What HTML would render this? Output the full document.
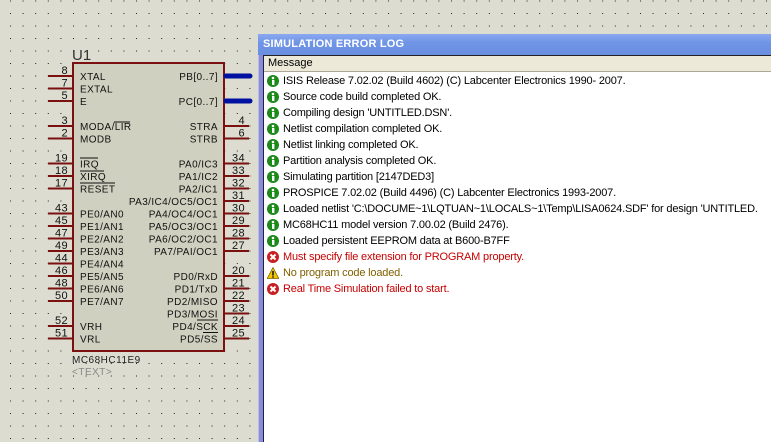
<!DOCTYPE html>
<html><head><meta charset="utf-8"><style>
html,body{margin:0;padding:0;width:771px;height:442px;overflow:hidden;background:#dcdcd0;position:relative;}
svg text{font-family:"Liberation Sans",sans-serif;}
#win{position:absolute;left:258px;top:34px;width:513px;height:408px;background:#fff;overflow:hidden;}
#frame{position:absolute;left:0;top:0;width:4px;height:100%;background:#8a8cd8;border-left:1px solid #b8bce8;}
#frame2{position:absolute;left:5px;top:21px;width:1px;height:100%;background:#202040;}
#title{position:absolute;left:0;top:0;right:0;height:21px;background:linear-gradient(#8aa8f0,#7095e6 40%,#6a8ee0);color:#fff;font:bold 11px "Liberation Sans",sans-serif;line-height:21px;padding-left:5px;letter-spacing:0.2px;}
#hdr{position:absolute;left:6px;top:21px;right:0;height:15px;background:#ece9d8;border-top:1px solid #222;border-bottom:1px solid #aca899;font:11px "Liberation Sans",sans-serif;line-height:15px;padding-left:4px;color:#000;}
.row{position:absolute;left:9px;height:16px;font:11px "Liberation Sans",sans-serif;line-height:16px;white-space:nowrap;color:#000;}
.row svg{position:absolute;left:0;top:2px;}
.row span{position:absolute;left:16px;top:0;letter-spacing:-0.18px;}
.e{color:#c80000}.w{color:#806000}
</style></head><body>
<svg width="771" height="442" style="position:absolute;left:0;top:0">
<defs><pattern id="d" x="10" y="13" width="12.6" height="12.5" patternUnits="userSpaceOnUse"><rect x="0" y="0" width="1" height="1" fill="#222"/></pattern></defs>
<rect width="771" height="442" fill="url(#d)"/>
<text x="72" y="60" font-size="15" fill="#333">U1</text>
<rect x="73" y="63" width="151" height="288" fill="#d0d0c0" stroke="#7a1010" stroke-width="2"/>
<g stroke="#7a1010" stroke-width="2" id="pins"></g>
<g font-size="10" fill="#111" letter-spacing="0.4" id="labels"></g>
<line x1="226" y1="76" x2="250" y2="76" stroke="#0010a0" stroke-width="5" stroke-linecap="round"/>
<line x1="226" y1="101" x2="250" y2="101" stroke="#0010a0" stroke-width="5" stroke-linecap="round"/>
<text x="72" y="363" font-size="10" fill="#222" letter-spacing="0.5">MC68HC11E9</text>
<text x="72" y="375" font-size="10" fill="#888" letter-spacing="0.5">&lt;TEXT&gt;</text>
</svg>
<div id="win">
<div id="frame"></div><div id="frame2"></div>
<div id="title">SIMULATION ERROR LOG</div>
<div id="hdr">Message</div>
<div id="rows"></div>
</div>
<script>
var L=[[0,'XTAL','8','PB[0..7]',''],[1,'EXTAL','7','',''],[2,'E','5','PC[0..7]',''],[4,'MODA/LIR','3','STRA','4'],[5,'MODB','2','STRB','6'],[7,'IRQ','19','PA0/IC3','34'],[8,'XIRQ','18','PA1/IC2','33'],[9,'RESET','17','PA2/IC1','32'],[10,'','','PA3/IC4/OC5/OC1','31'],[11,'PE0/AN0','43','PA4/OC4/OC1','30'],[12,'PE1/AN1','45','PA5/OC3/OC1','29'],[13,'PE2/AN2','47','PA6/OC2/OC1','28'],[14,'PE3/AN3','49','PA7/PAI/OC1','27'],[15,'PE4/AN4','44','',''],[16,'PE5/AN5','46','PD0/RxD','20'],[17,'PE6/AN6','48','PD1/TxD','21'],[18,'PE7/AN7','50','PD2/MISO','22'],[19,'','','PD3/MOSI','23'],[20,'VRH','52','PD4/SCK','24'],[21,'VRL','51','PD5/SS','25']];
var p='',t='';
L.forEach(function(r){var y=76+r[0]*12.5;
if(r[2]){p+='<line x1="48" y1="'+y+'" x2="73" y2="'+y+'"/>';t+='<text x="68" y="'+(y-2)+'" text-anchor="end" font-size="11">'+r[2]+'</text>';}
if(r[1])t+='<text x="80" y="'+(y+4)+'">'+r[1]+'</text>';
if(r[4]){p+='<line x1="224" y1="'+y+'" x2="249" y2="'+y+'"/>';t+='<text x="245" y="'+(y-2)+'" text-anchor="end" font-size="11">'+r[4]+'</text>';}
if(r[3])t+='<text x="218" y="'+(y+4)+'" text-anchor="end">'+r[3]+'</text>';});
t+='<line x1="114" y1="122" x2="130" y2="122" stroke="#111"/><line x1="80" y1="158" x2="98" y2="158" stroke="#111"/><line x1="80" y1="171" x2="104" y2="171" stroke="#111"/><line x1="80" y1="183" x2="115" y2="183" stroke="#111"/><line x1="197" y1="320" x2="218" y2="320" stroke="#111"/><line x1="203" y1="332.5" x2="218" y2="332.5" stroke="#111"/>';
document.getElementById('pins').innerHTML=p;document.getElementById('labels').innerHTML=t;
var M=[['i','ISIS Release 7.02.02 (Build 4602) (C) Labcenter Electronics 1990- 2007.'],['i','Source code build completed OK.'],['i',"Compiling design 'UNTITLED.DSN'."],['i','Netlist compilation completed OK.'],['i','Netlist linking completed OK.'],['i','Partition analysis completed OK.'],['i','Simulating partition [2147DED3]'],['i','PROSPICE 7.02.02 (Build 4496) (C) Labcenter Electronics 1993-2007.'],['i',"Loaded netlist 'C:\\DOCUME~1\\LQTUAN~1\\LOCALS~1\\Temp\\LISA0624.SDF' for design 'UNTITLED."],['i','MC68HC11 model version 7.00.02 (Build 2476).'],['i','Loaded persistent EEPROM data at B600-B7FF'],['e','Must specify file extension for PROGRAM property.'],['w','No program code loaded.'],['e','Real Time Simulation failed to start.']];
var ic={i:'<circle cx="6" cy="6" r="6" fill="#1a8a1a"/><circle cx="6" cy="3" r="1.3" fill="#fff"/><rect x="5" y="5" width="2.4" height="5" fill="#fff"/>',e:'<circle cx="6" cy="6" r="6" fill="#c82020"/><path d="M3.5 3.5L8.5 8.5M8.5 3.5L3.5 8.5" stroke="#fff" stroke-width="2"/>',w:'<path d="M6 0.5L11.8 11.5H0.2Z" fill="#f0c800" stroke="#806000" stroke-width="0.8"/><rect x="5.3" y="4" width="1.4" height="4.5" fill="#000"/><rect x="5.3" y="9.3" width="1.4" height="1.4" fill="#000"/>'};
var h='';M.forEach(function(m,i){h+='<div class="row" style="top:'+(39+i*16)+'px"><svg width="12" height="12">'+ic[m[0]]+'</svg><span class="'+(m[0]=='i'?'':m[0])+'">'+m[1].replace(/&/g,'&amp;')+'</span></div>';});
document.getElementById('rows').innerHTML=h;
</script>
</body></html>
